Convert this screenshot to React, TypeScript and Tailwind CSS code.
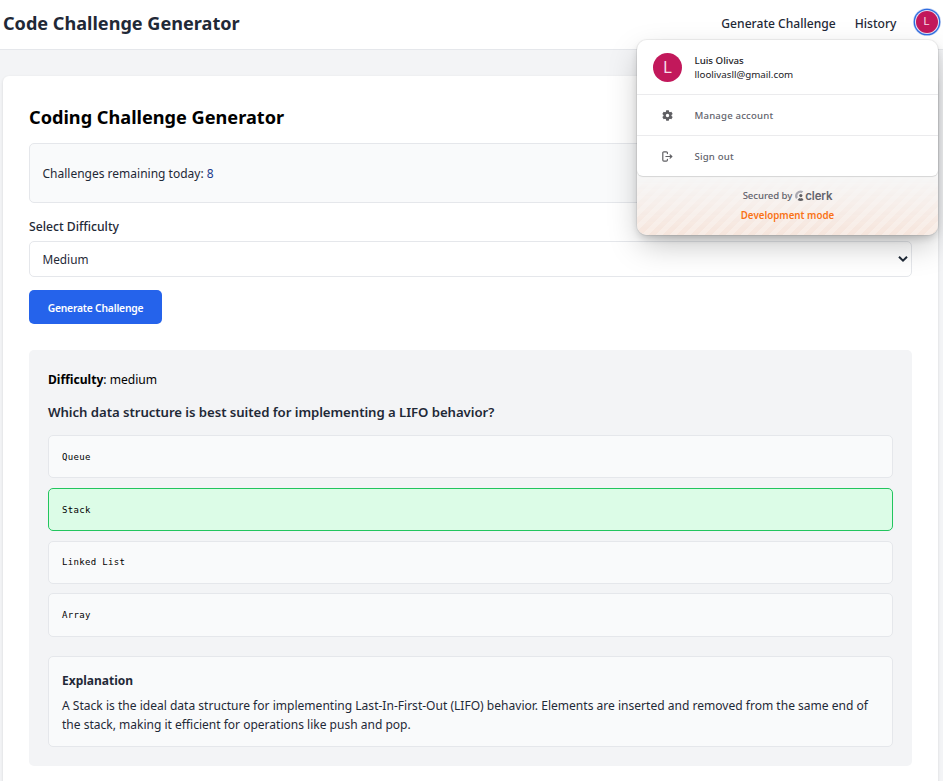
import React from "react";

const OPTIONS = [
  { text: "Queue", correct: false, place: "mt-[13px] h-[43px] pt-[2px]" },
  { text: "Stack", correct: true, place: "mt-[10px] h-[43px] pt-[2px]" },
  { text: "Linked List", correct: false, place: "mt-[10px] h-[43px]" },
  { text: "Array", correct: false, place: "mt-[9px] h-[44px] pt-[1px]" },
];

function GearIcon() {
  return (
    <svg viewBox="0 0 16 16" className="h-[13px] w-[13px]" fill="#5f5f63">
      <path
        fillRule="evenodd"
        d="M6.4 1.6h3.2l.35 1.9 1 .58 1.82-.64 1.6 2.78-1.45 1.25v1.06l1.45 1.25-1.6 2.78-1.82-.64-1 .58-.35 1.9H6.4l-.35-1.9-1-.58-1.82.64-1.6-2.78 1.45-1.25V7.47L1.63 6.22l1.6-2.78 1.82.64 1-.58.35-1.9ZM8 10.1a2.1 2.1 0 1 0 0-4.2 2.1 2.1 0 0 0 0 4.2Z"
      />
    </svg>
  );
}

function SignOutIcon() {
  return (
    <svg
      viewBox="0 0 13 13"
      className="h-[13px] w-[13px]"
      fill="none"
      stroke="#5f5f63"
      strokeWidth="1.2"
      strokeLinecap="round"
      strokeLinejoin="round"
    >
      <path d="M6.4 3.6V2.9c0-.7-.4-1.1-1.1-1.1H2.9c-.7 0-1.1.4-1.1 1.1v7.2c0 .7.4 1.1 1.1 1.1h2.4c.7 0 1.1-.4 1.1-1.1v-.7M4.9 6.5h6M9.1 4.8l1.7 1.7-1.7 1.7" />
    </svg>
  );
}

function ClerkMark() {
  return (
    <svg viewBox="0 0 9 11" className="h-[11px] w-[9px]">
      <path
        d="M8.3 1.2 6.7 3.1A2.9 2.9 0 0 0 2.9 7.2L1.1 9.1A5.5 5.5 0 0 1 8.3 1.2Z"
        fill="#747686"
        opacity=".6"
      />
      <circle cx="5.8" cy="5.6" r="1.6" fill="#5f5f63" />
      <path
        d="M8.6 9.9a5.3 5.3 0 0 1-6 0l1.6-1.8a3.2 3.2 0 0 0 2.8 0Z"
        fill="#5f5f63"
      />
    </svg>
  );
}

function UserMenu() {
  return (
    <div className="absolute left-[637px] top-[40px] z-10 h-[195px] w-[301px] overflow-visible rounded-[10px] bg-[#f7f7f7] shadow-[0_0_0_1px_rgba(0,0,0,0.05),0_12px_32px_-4px_rgba(0,0,0,0.26),0_4px_8px_-2px_rgba(0,0,0,0.2)]">
      <div className="relative flex h-[136px] flex-col rounded-t-[10px] rounded-b-[6px] bg-white shadow-[0_1px_1px_rgba(0,0,0,0.14)]">
        <div className="flex h-[54px] items-center pl-[16px]">
          <div className="flex h-[29px] w-[29px] items-center justify-center rounded-full bg-[#c2185b] pt-px font-['Roboto'] text-[16px] text-[#f7dce7]">
            L
          </div>
          <div className="ml-[12.5px] mt-px font-['Noto_Sans'] text-[#212126]">
            <div className="h-[14px] text-[9.7px] font-medium leading-[14px]">
              <span className="whitespace-nowrap">Luis Olivas</span>
            </div>
            <div className="h-[14px] text-[9.75px] leading-[14px]">
              <span className="whitespace-nowrap">lloolivasll@gmail.com</span>
            </div>
          </div>
        </div>
        <div className="flex h-[41px] items-center border-t border-[#ebebed] pl-[24px]">
          <GearIcon />
          <span className="ml-[20.5px] mt-[2px] font-['Noto_Sans'] text-[9.6px] font-medium tracking-[0.18px] text-[#62636c]">
            Manage account
          </span>
        </div>
        <div className="flex h-[41px] items-center border-t border-[#ebebed] pl-[24px]">
          <SignOutIcon />
          <span className="ml-[20.5px] mt-[2px] font-['Noto_Sans'] text-[9.6px] font-medium tracking-[0.18px] text-[#62636c]">
            Sign out
          </span>
        </div>
      </div>
      <div className="relative h-[59px] overflow-hidden rounded-b-[10px]">
        <div className="absolute inset-0 bg-[repeating-linear-gradient(-45deg,#f6e5dc_0px,#f6e5dc_5px,#f8ece5_5px,#f8ece5_10px)] [mask-image:linear-gradient(to_top,black,transparent)]" />
        <div className="relative flex h-full flex-col items-center pt-[12px] font-['Noto_Sans'] text-[9.6px] font-medium leading-[14px]">
          <div className="flex h-[14px] items-center text-[#62636c]">
            <span className="relative top-px tracking-[-0.05px]">Secured by</span>
            <span className="ml-[3px] mr-px">
              <ClerkMark />
            </span>
            <span className="relative top-px font-['Inter'] text-[11.4px] font-semibold tracking-[-0.1px]">clerk</span>
          </div>
          <div className="relative top-px mt-[6px] h-[14px] text-[9.75px] font-semibold text-[#f97316]">
            Development mode
          </div>
        </div>
      </div>
    </div>
  );
}

export default function App() {
  return (
    <div className="relative h-[781px] w-[943px] overflow-hidden bg-[#f3f4f6] font-['Noto_Sans',sans-serif] text-[12px] text-[#1f2937]">
      <header className="flex h-[50px] items-center border-b border-[#e5e7eb] bg-white pb-[3px] pl-[3px] pr-[5px]">
        <h1 className="mt-[2px] whitespace-nowrap text-[18.1px] font-bold">Code Challenge Generator</h1>
        <nav className="ml-auto flex items-center whitespace-nowrap text-[12.1px] font-medium">
          <a className="relative top-px">Generate Challenge</a>
          <a className="relative top-px ml-[19px]">History</a>
          <div className="relative -top-px ml-[19px] mr-[0.5px] flex h-[22px] w-[22px] items-center justify-center rounded-full bg-[#c2185b] pt-px font-['Roboto'] text-[11px] font-normal text-[#f7dce7] shadow-[0_0_0_1px_#e8e0f2,0_0_0_2.3px_#2f6de0,0_0_0_3px_#c9d7f5]">
            L
          </div>
        </nav>
      </header>

      <main className="ml-[3px] mt-[26px] h-[760px] w-[935px] rounded-[6px] bg-white px-[26px] pt-[29px] shadow-[0_1px_3px_rgba(0,0,0,0.12)]">
        <h2 className="h-[24px] whitespace-nowrap text-[18.15px] font-bold leading-[24px] text-black">
          Coding Challenge Generator
        </h2>
        <div className="mt-[14px] flex h-[60px] w-[883px] items-center rounded-[5px] border border-[#e5e7eb] bg-[#f9fafb] pl-[12.5px] pt-[2px]">
          <span>Challenges remaining today:&nbsp;</span>
          <span className="text-[#1e3a8a]">8</span>
        </div>
        <label className="mt-[15px] block h-[18px] text-[12.2px] font-medium leading-[18px]">
          Select Difficulty
        </label>
        <div className="mt-[5px] flex h-[36px] w-[883px] items-center justify-between rounded-[5px] border border-[#e5e7eb] bg-white pl-[12.5px] pr-[3px]">
          <span className="relative top-px text-[11.8px]">Medium</span>
          <svg viewBox="0 0 10 8" className="h-[8px] w-[10px]" fill="none" stroke="#1f2937" strokeWidth="2">
            <path d="M1 1.7 5 5.7 9 1.7" />
          </svg>
        </div>
        <button className="mt-[13px] flex h-[34px] w-[133px] items-center justify-center whitespace-nowrap rounded-[5px] bg-[#2563eb] pt-[3px] text-[10.3px] font-semibold tracking-[-0.2px] text-white">
          Generate Challenge
        </button>

        <section className="mt-[26px] h-[416px] w-[883px] rounded-[5px] bg-[#f3f4f6] px-[19px] pt-[21px]">
          <p className="h-[18px] leading-[18px] text-black">
            <strong className="text-[12.1px] font-bold">Difficulty</strong>
            <span className="text-[12.1px]">: medium</span>
          </p>
          <p className="mt-[13px] h-[20px] text-[13.2px] font-semibold leading-[20px] tracking-[-0.06px]">
            Which data structure is best suited for implementing a LIFO behavior?
          </p>
          {OPTIONS.map((option) => (
            <div
              key={option.text}
              className={`${option.place} flex items-center rounded-[5px] border pl-[13px] font-['DejaVu_Sans_Mono'] text-[9px] tracking-[0.33px] text-black ${
                option.correct
                  ? "border-[#22c55e] bg-[#dcfce7]"
                  : "border-[#e5e7eb] bg-[#f9fafb]"
              }`}
            >
              {option.text}
            </div>
          ))}
          <div className="mt-[19px] h-[91px] whitespace-nowrap rounded-[5px] border border-[#e5e7eb] bg-[#f9fafb] pl-[13px] pt-[14px]">
            <h4 className="h-[20px] font-bold leading-[20px]">Explanation</h4>
            <p className="mt-[5px] leading-[19px]">
              <span className="block text-[12.05px]">
                A Stack is the ideal data structure for implementing Last-In-First-Out (LIFO) behavior. Elements are inserted and removed from the same end of
              </span>
              <span className="block text-[12.02px]">
                the stack, making it efficient for operations like push and pop.
              </span>
            </p>
          </div>
        </section>
      </main>
      <UserMenu />
    </div>
  );
}
